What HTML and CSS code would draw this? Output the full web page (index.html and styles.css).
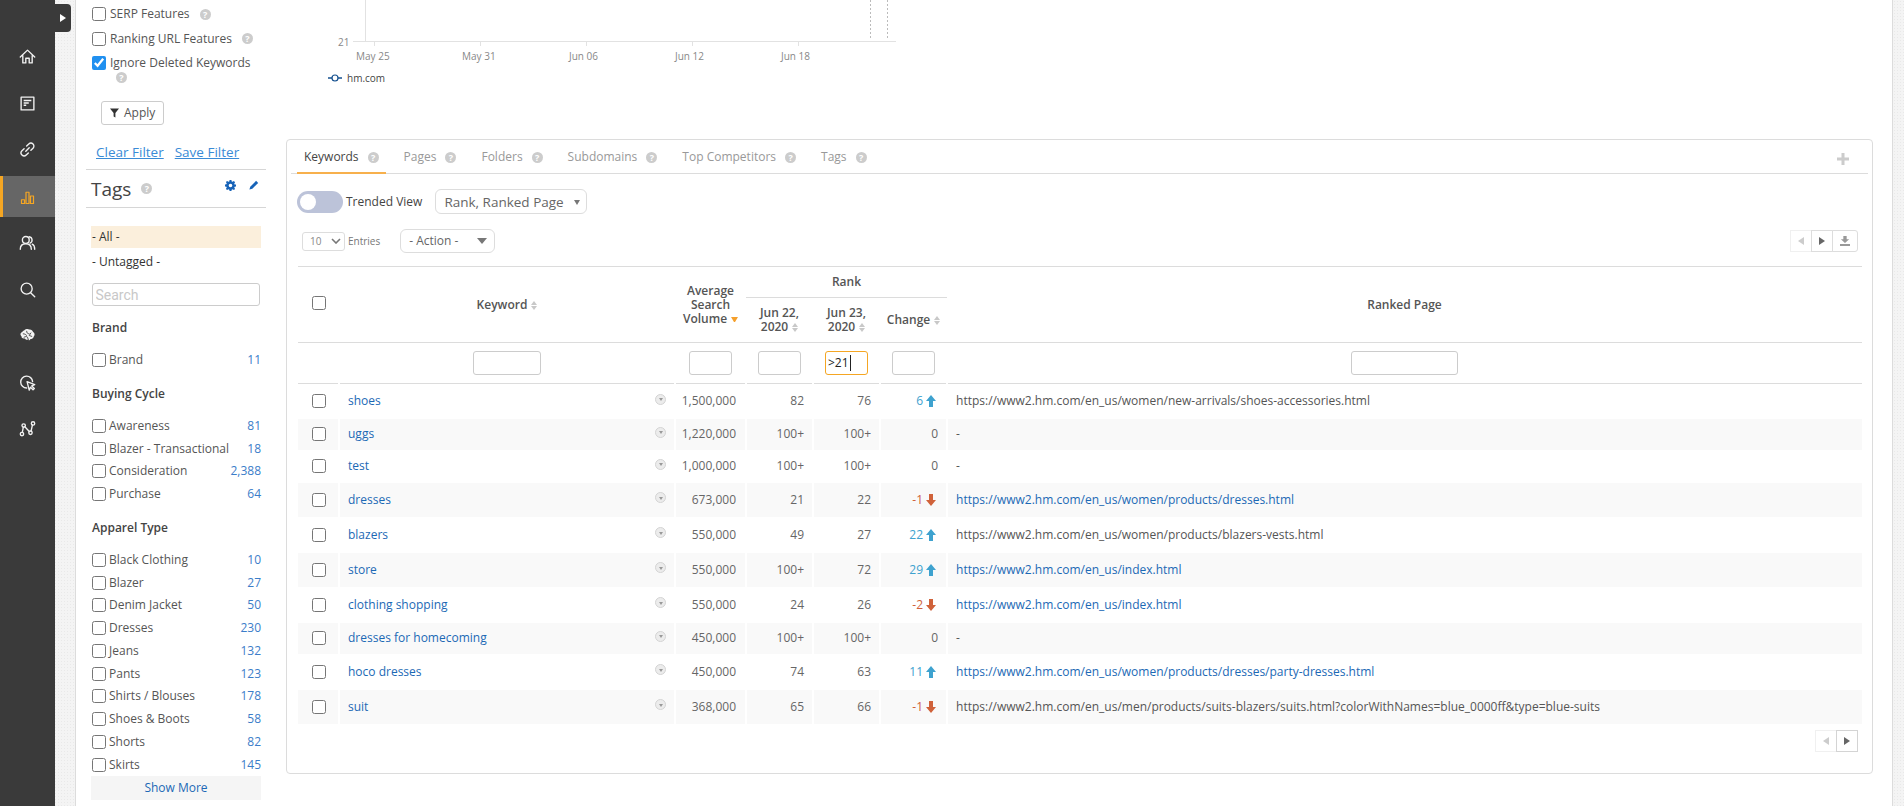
FILE: index.html
```html
<!DOCTYPE html>
<html lang="en">
<head>
<meta charset="utf-8">
<title>Rankings</title>
<link rel="stylesheet" href="styles.css">
</head>
<body>
<svg class="defs" width="0" height="0">
  <symbol id="up" viewBox="0 0 10 12"><path d="M5 0 10 6H7V12H3V6H0Z"/></symbol>
  <symbol id="down" viewBox="0 0 10 12"><path d="M5 12 10 6H7V0H3V6H0Z"/></symbol>
</svg>
<nav class="rail">
  <a class="rail-item"><svg class="ico" viewBox="0 0 20 20"><path d="M1.500 10.500 10 2.500l8.500 8M4.500 9v8.500H8V12h4v5.500h3.500V9"/></svg></a>
  <a class="rail-item"><svg class="ico" viewBox="0 0 20 20"><path d="M2.500 2.500h15v15h-15z"/><path class="fat" d="M5.500 6.500h9M5.500 9.500h6M5.500 12h3"/></svg></a>
  <a class="rail-item"><svg class="ico" viewBox="0 0 20 20"><path d="M8 12 12 8M9 6l2.500-2.500a3.500 3.500 0 0 1 5 5L14 11M11 14l-2.500 2.500a3.500 3.500 0 0 1-5-5L6 9"/></svg></a>
  <a class="rail-item active"><svg class="ico ico-chart" viewBox="0 0 20 20"><path d="M2 13h4v5H2zM8 3h4v15H8zM14 8h4v10h-4z"/></svg></a>
  <a class="rail-item"><svg class="ico" viewBox="0 0 20 20"><circle cx="8" cy="7" r="4"/><path d="M1.500 18c0-4 2.500-6.500 6.500-6.500s6.500 2.500 6.500 6.500M12 3.200a4 4 0 0 1 1 7.600M15.500 12c2 .9 3 3 3 6"/></svg></a>
  <a class="rail-item"><svg class="ico" viewBox="0 0 20 20"><circle cx="9" cy="9" r="6.500"/><path d="M14 14l4.500 4.500"/></svg></a>
  <a class="rail-item"><svg class="ico" viewBox="0 0 20 20"><path class="solid" d="M6 4c2-2 5-2 6-1 2-.5 4 1 4.500 3 2 1 2.500 3.500 1 5-.2 2-2 3.500-4 3-.5 1.500-2 2-3 1-1.500.5-3-.5-3.500-1.500C4 14 2.500 12.500 3 11 1 9.500 1.500 6.500 4 6c0-1 1-2 2-2Z"/><path class="cut" d="M5 8c2 0 3 1 4 2M9 5c0 2 1 3 3 3M14 7l-2 3 3 1M6 12c2-1 3-1 4 0l1 3"/></svg></a>
  <a class="rail-item"><svg class="ico" viewBox="0 0 20 20"><path d="M9 16.500a7 7 0 1 1 7-7.500"/><path d="M9.500 9l9 3.500-3.500 1.500 3 3-1.500 1.500-3-3-1.500 3.500Z"/></svg></a>
  <a class="rail-item"><svg class="ico" viewBox="0 0 20 20"><circle cx="3.500" cy="16.500" r="2"/><circle cx="5.500" cy="6.500" r="2"/><circle cx="13.500" cy="15" r="2"/><circle cx="16.500" cy="4" r="2"/><path d="M3.900 14.500l1.200-6M6.900 8l5.200 5.500M14.200 13.100l1.600-7.200"/></svg></a>
</nav>
<button class="rail-toggle" type="button" aria-label="Expand"><span class="tri-right"></span></button>

<main class="sheet">
  <aside class="filters">
    <div class="opts">
      <label class="opt"><input class="cb" type="checkbox"><span>SERP Features</span><i class="help">?</i></label>
      <label class="opt"><input class="cb" type="checkbox"><span>Ranking URL Features</span><i class="help">?</i></label>
      <label class="opt"><input class="cb" type="checkbox" checked><span>Ignore Deleted Keywords</span></label>
      <i class="help help-below">?</i>
    </div>
    <button class="apply" type="button"><svg class="funnel" viewBox="0 0 10 10"><path d="M0 0H10L6 5V10L4 9V5Z"/></svg>Apply</button>
    <div class="filter-links"><a>Clear Filter</a><a>Save Filter</a></div>
    <div class="tags-head">
      <h2>Tags</h2><i class="help">?</i>
      <svg class="tool tool-gear" viewBox="0 0 12 12"><path fill-rule="evenodd" d="M5 0h2l.3 1.600 1 .4L9.700 1.100l1.300 1.300-.9 1.400.4 1L12 5v2l-1.500.3-.4 1 .9 1.400-1.300 1.300-1.400-.9-1 .4L7 12H5l-.3-1.500-1-.4-1.400.9-1.300-1.300.9-1.400-.4-1L0 7V5l1.500-.3.4-1-.9-1.400L2.300 1l1.400.9 1-.4ZM6 4a2 2 0 1 0 0 4 2 2 0 0 0 0-4Z"/></svg>
      <svg class="tool tool-pen" viewBox="0 0 12 12"><path d="M8.500 1 11 3.500 4 10.500 0.500 11.500 1.500 8Z"/></svg>
    </div>
    <div class="tag-all">- All -</div>
    <div class="tag-untagged">- Untagged -</div>
    <input class="tag-search" type="text" placeholder="Search">

    <h3 class="group">Brand</h3>
    <label class="tag"><input class="cb" type="checkbox"><span>Brand</span><b>11</b></label>

    <h3 class="group">Buying Cycle</h3>
    <label class="tag"><input class="cb" type="checkbox"><span>Awareness</span><b>81</b></label>
    <label class="tag"><input class="cb" type="checkbox"><span>Blazer - Transactional</span><b>18</b></label>
    <label class="tag"><input class="cb" type="checkbox"><span>Consideration</span><b>2,388</b></label>
    <label class="tag"><input class="cb" type="checkbox"><span>Purchase</span><b>64</b></label>

    <h3 class="group">Apparel Type</h3>
    <label class="tag"><input class="cb" type="checkbox"><span>Black Clothing</span><b>10</b></label>
    <label class="tag"><input class="cb" type="checkbox"><span>Blazer</span><b>27</b></label>
    <label class="tag"><input class="cb" type="checkbox"><span>Denim Jacket</span><b>50</b></label>
    <label class="tag"><input class="cb" type="checkbox"><span>Dresses</span><b>230</b></label>
    <label class="tag"><input class="cb" type="checkbox"><span>Jeans</span><b>132</b></label>
    <label class="tag"><input class="cb" type="checkbox"><span>Pants</span><b>123</b></label>
    <label class="tag"><input class="cb" type="checkbox"><span>Shirts / Blouses</span><b>178</b></label>
    <label class="tag"><input class="cb" type="checkbox"><span>Shoes &amp; Boots</span><b>58</b></label>
    <label class="tag"><input class="cb" type="checkbox"><span>Shorts</span><b>82</b></label>
    <label class="tag"><input class="cb" type="checkbox"><span>Skirts</span><b>145</b></label>
    <div class="show-more">Show More</div>
  </aside>

  <section class="content">
    <svg class="chart" width="620" height="139" viewBox="286 0 620 139">
      <path class="axis" d="M365.500 0V41.500M353 41.500H896M374.500 41V46M480.500 41V46M586.500 41V46M692.500 41V46M798.500 41V46"/>
      <path class="dots" d="M870.500 0V39M887.500 0V39"/>
      <text class="tick" x="338" y="46">21</text>
      <text class="tick" x="356" y="60">May 25</text>
      <text class="tick" x="462" y="60">May 31</text>
      <text class="tick" x="569" y="60">Jun 06</text>
      <text class="tick" x="675" y="60">Jun 12</text>
      <text class="tick" x="781" y="60">Jun 18</text>
      <path class="legend-line" d="M328 78H342"/>
      <circle class="legend-dot" cx="335" cy="78" r="3"/>
      <text class="legend" x="347" y="81.500">hm.com</text>
    </svg>

    <div class="panel">
      <div class="tabs">
        <a class="tab current">Keywords<i class="help">?</i></a>
        <a class="tab">Pages<i class="help">?</i></a>
        <a class="tab">Folders<i class="help">?</i></a>
        <a class="tab">Subdomains<i class="help">?</i></a>
        <a class="tab">Top Competitors<i class="help">?</i></a>
        <a class="tab">Tags<i class="help">?</i></a>
        <svg class="add-tab" viewBox="0 0 12 12"><path d="M4.500 0h3v4.500H12v3H7.500V12h-3V7.500H0v-3h4.500Z"/></svg>
      </div>
      <div class="panel-body">
        <div class="bar-view">
          <span class="switch"><span class="knob"></span></span>
          <span class="switch-label">Trended View</span>
          <div class="pick pick-cols">Rank, Ranked Page<span class="tri-down small"></span></div>
        </div>
        <div class="bar-list">
          <div class="entries">10<svg class="chev" viewBox="0 0 10 6"><path d="M1 1l4 4 4-4"/></svg></div>
          <span class="entries-label">Entries</span>
          <div class="pick pick-action">- Action -<span class="tri-down"></span></div>
          <div class="pager top-pager">
            <span class="pg off"><span class="tri-left"></span></span>
            <span class="pg"><span class="tri-right dark"></span></span>
            <span class="pg wide"><svg class="dl" viewBox="0 0 12 12"><path d="M4 0H8V4H11L6 8.500 1 4H4ZM0 9.500H12V12H0Z"/></svg></span>
          </div>
        </div>

        <table class="grid">
          <colgroup>
            <col class="c-check"><col class="c-key"><col class="c-vol"><col class="c-rank"><col class="c-rank"><col class="c-rank"><col>
          </colgroup>
          <thead>
            <tr class="h1">
              <th rowspan="2"><input class="cb" type="checkbox"></th>
              <th rowspan="2">Keyword<span class="sort"></span></th>
              <th rowspan="2" class="vol-head">Average<br>Search<br>Volume<span class="sort-on"></span></th>
              <th colspan="3" class="rank-head">Rank</th>
              <th rowspan="2">Ranked Page</th>
            </tr>
            <tr class="h2">
              <th>Jun 22,<br>2020<span class="sort"></span></th>
              <th>Jun 23,<br>2020<span class="sort"></span></th>
              <th>Change<span class="sort"></span></th>
            </tr>
            <tr class="h3">
              <td></td>
              <td><input class="fi fi-key" type="text"></td>
              <td><input class="fi" type="text"></td>
              <td><input class="fi" type="text"></td>
              <td><div class="fi on">&gt;21<span class="cursor"></span></div></td>
              <td><input class="fi" type="text"></td>
              <td><input class="fi fi-page" type="text"></td>
            </tr>
          </thead>
          <tbody>
            <tr><td class="chk"><input class="cb" type="checkbox"></td><td><div class="kw"><a>shoes</a><span class="more"></span></div></td><td class="n vol">1,500,000</td><td class="n">82</td><td class="n">76</td><td class="n"><span class="chg up">6<svg class="arr"><use href="#up"/></svg></span></td><td class="url">https://www2.hm.com/en_us/women/new-arrivals/shoes-accessories.html</td></tr>
            <tr><td class="chk"><input class="cb" type="checkbox"></td><td><div class="kw"><a>uggs</a><span class="more"></span></div></td><td class="n vol">1,220,000</td><td class="n">100+</td><td class="n">100+</td><td class="n">0</td><td class="url">-</td></tr>
            <tr><td class="chk"><input class="cb" type="checkbox"></td><td><div class="kw"><a>test</a><span class="more"></span></div></td><td class="n vol">1,000,000</td><td class="n">100+</td><td class="n">100+</td><td class="n">0</td><td class="url">-</td></tr>
            <tr><td class="chk"><input class="cb" type="checkbox"></td><td><div class="kw"><a>dresses</a><span class="more"></span></div></td><td class="n vol">673,000</td><td class="n">21</td><td class="n">22</td><td class="n"><span class="chg dn">-1<svg class="arr"><use href="#down"/></svg></span></td><td class="url"><a>https://www2.hm.com/en_us/women/products/dresses.html</a></td></tr>
            <tr><td class="chk"><input class="cb" type="checkbox"></td><td><div class="kw"><a>blazers</a><span class="more"></span></div></td><td class="n vol">550,000</td><td class="n">49</td><td class="n">27</td><td class="n"><span class="chg up">22<svg class="arr"><use href="#up"/></svg></span></td><td class="url">https://www2.hm.com/en_us/women/products/blazers-vests.html</td></tr>
            <tr><td class="chk"><input class="cb" type="checkbox"></td><td><div class="kw"><a>store</a><span class="more"></span></div></td><td class="n vol">550,000</td><td class="n">100+</td><td class="n">72</td><td class="n"><span class="chg up">29<svg class="arr"><use href="#up"/></svg></span></td><td class="url"><a>https://www2.hm.com/en_us/index.html</a></td></tr>
            <tr><td class="chk"><input class="cb" type="checkbox"></td><td><div class="kw"><a>clothing shopping</a><span class="more"></span></div></td><td class="n vol">550,000</td><td class="n">24</td><td class="n">26</td><td class="n"><span class="chg dn">-2<svg class="arr"><use href="#down"/></svg></span></td><td class="url"><a>https://www2.hm.com/en_us/index.html</a></td></tr>
            <tr><td class="chk"><input class="cb" type="checkbox"></td><td><div class="kw"><a>dresses for homecoming</a><span class="more"></span></div></td><td class="n vol">450,000</td><td class="n">100+</td><td class="n">100+</td><td class="n">0</td><td class="url">-</td></tr>
            <tr><td class="chk"><input class="cb" type="checkbox"></td><td><div class="kw"><a>hoco dresses</a><span class="more"></span></div></td><td class="n vol">450,000</td><td class="n">74</td><td class="n">63</td><td class="n"><span class="chg up">11<svg class="arr"><use href="#up"/></svg></span></td><td class="url"><a>https://www2.hm.com/en_us/women/products/dresses/party-dresses.html</a></td></tr>
            <tr><td class="chk"><input class="cb" type="checkbox"></td><td><div class="kw"><a>suit</a><span class="more"></span></div></td><td class="n vol">368,000</td><td class="n">65</td><td class="n">66</td><td class="n"><span class="chg dn">-1<svg class="arr"><use href="#down"/></svg></span></td><td class="url">https://www2.hm.com/en_us/men/products/suits-blazers/suits.html?colorWithNames=blue_0000ff&amp;type=blue-suits</td></tr>
          </tbody>
        </table>
        <div class="pager-row">
          <div class="pager">
            <span class="pg off"><span class="tri-left"></span></span>
            <span class="pg strong"><span class="tri-right dark"></span></span>
          </div>
        </div>
      </div>
    </div>
  </section>
</main>
</body>
</html>
```
FILE: styles.css
```css
* { box-sizing: border-box; }
html, body { margin: 0; height: 806px; overflow: hidden; }
body {
  display: flex;
  font: 12px/16px "Open Sans", sans-serif;
  color: #555;
  background-color: #f4f4f4;
  background-image: radial-gradient(#e9e9e9 1px, transparent 1px);
  background-size: 3px 3px;
  position: relative;
}
a { color: #1c69b5; text-decoration: none; }
h2, h3 { margin: 0; font-weight: 400; }
.defs { position: absolute; }

/* left rail */
.rail {
  width: 55px;
  flex: none;
  background: #3a3a3a;
  padding-top: 36px;
  display: flex;
  flex-direction: column;
  gap: 5.5px;
}
.rail-item { height: 41px; display: flex; align-items: center; justify-content: center; border-left: 3px solid transparent; padding-right: 3px; }
.rail-item.active { background: #666; border-left-color: #f5a623; }
.ico { width: 17px; height: 17px; fill: none; stroke: #f2f2f2; stroke-width: 1.6; stroke-linejoin: round; stroke-linecap: round; }
.ico-chart { width: 15px; height: 15px; position: relative; top: 1px; }
.ico .fat { stroke-width: 1.8; stroke-linecap: butt; }
.ico .solid { fill: #f2f2f2; stroke: none; }
.ico .cut { stroke: #3a3a3a; stroke-width: 1; }
.active .ico { stroke: #f5a623; }
.rail-toggle {
  position: absolute; left: 55px; top: 4px;
  width: 16px; height: 28px; padding: 0 0 0 5px; border: 0;
  background: #3a3a3a; border-radius: 0 4px 4px 0;
  display: flex; align-items: center;
}
.tri-right { display: inline-block; border: solid transparent; border-width: 4.5px 0 4.500px 6px; border-left-color: #fff; }
.tri-right.dark { border-left-color: #666; }
.tri-left { display: inline-block; border: solid transparent; border-width: 4.5px 6px 4.500px 0; border-right-color: #ccc; }
.tri-down { display: inline-block; border: solid transparent; border-width: 6px 5px 0; border-top-color: #777; }
.tri-down.small { border-width: 5px 3.5px 0; margin-left: 10px; position: relative; top: 1px; }

/* sheet */
.sheet {
  margin-left: 20px; margin-right: 11px;
  flex: 1;
  min-width: 0;
  display: flex;
  background: #fff;
  border: solid #dcdcdc;
  border-width: 0 1px;
}
.filters { width: 210px; flex: none; padding-left: 10px; }
.cb { width: 14px; height: 14px; margin: 0; flex: none; accent-color: #2090f0; }
.help {
  display: inline-block; width: 11px; height: 11px; border-radius: 50%;
  background: #ccc; color: #fff; font: 700 9px/11px "Open Sans", sans-serif; text-align: center; flex: none;
}
.opts { padding-left: 6px; padding-top: 2px; height: 101px; }
.opt { display: flex; align-items: center; height: 24.500px; gap: 4px; }
.opt .help { margin-left: 6px; }
.help-below { display: block; margin: -3.500px 0 0 24px; }
.apply {
  display: flex; align-items: center; gap: 5px;
  margin-left: 15px; width: 63px; height: 24px; padding: 0 0 0 8px;
  font: inherit; color: #555; background: #fff; border: 1px solid #ccc; border-radius: 3px;
}
.funnel { width: 9px; height: 10px; fill: #333; }
.filter-links { display: flex; gap: 11px; margin: 17px 0 0 10px; font-size: 13.500px; line-height: 20px; }
.filter-links a { color: #3a8bd6; text-decoration: underline; }
.tags-head {
  width: 180px; height: 39px; margin-top: 7px;
  border: solid #d6d6d6; border-width: 1px 0;
  display: flex; align-items: center; gap: 10px; padding: 0 5px;
  position: relative;
}
.tags-head h2 { font-size: 19px; color: #444; font-family: "Open Sans", sans-serif; }
.tool { position: absolute; top: 10px; width: 10px; height: 10px; fill: #1763b8; }
.tool-gear { left: 139px; width: 11px; height: 11px; }
.tool-pen { left: 163px; }
.tag-all { width: 170px; margin: 18px 0 0 5px; height: 22px; line-height: 22px; background: #fbefdc; color: #333; padding-left: 1px; }
.tag-untagged { margin: 2px 0 0 6px; height: 24px; line-height: 24px; color: #333; }
.tag-search {
  display: block; margin: 9px 0 0 5.5px; width: 168px; height: 23px; padding: 0 3px;
  border: 1px solid #ccc; border-radius: 3px; font: 14px Roboto, sans-serif;
}
.tag-search::placeholder { color: #c8c8c8; }
.group { margin: 11px 0 9.900px 6px; font: 600 12px/22px "Open Sans", sans-serif; color: #444; }
.tag { display: flex; align-items: center; gap: 3px; width: 169px; height: 22.750px; margin-left: 6px; }
.tag b { margin-left: auto; font-weight: 400; color: #3b7dc9; }
.show-more { width: 170px; margin: 0 0 0 5px; height: 24px; line-height: 24px; text-align: center; background: #f5f5f5; color: #1c69b5; }

/* content */
.content { flex: 1; min-width: 0; padding-right: 19px; }
.chart { display: block; }
.axis { stroke: #e2e2e2; fill: none; }
.dots { stroke: #bbb; stroke-dasharray: 2 2; fill: none; }
.tick { font: 10px "Open Sans", sans-serif; fill: #888; }
.legend { font: 10px "Open Sans", sans-serif; fill: #444; }
.legend-line { stroke: #15508f; stroke-width: 1.5; }
.legend-dot { fill: #fff; stroke: #15508f; stroke-width: 1.2; }

.panel { height: 635px; border: 1px solid #dcdcdc; border-radius: 4px; }
.tabs {
  margin: 0 4px; height: 34px; display: flex; align-items: stretch; gap: 11px; padding-left: 6px;
  border-bottom: 1px solid #dcdcdc;
}
.tab { display: flex; align-items: center; gap: 9px; padding: 2px 7px 0; color: #999; margin-bottom: -1px; border-bottom: 2px solid transparent; }
.tab.current { color: #444; border-bottom-color: #f7b04c; }
.add-tab { margin: 13px 19px 0 auto; width: 12px; height: 12px; fill: #ccc; }
.panel-body { padding: 15px 10px 0 11px; }
.bar-view { display: flex; align-items: center; height: 25px; margin-left: -1px; }
.switch { width: 46px; height: 22px; background: #bcc3d9; border-radius: 11px; padding: 3px; }
.knob { display: block; width: 16px; height: 16px; border-radius: 50%; background: #fff; }
.switch-label { margin-left: 3px; color: #444; }
.pick {
  display: flex; align-items: center; background: #fff; border: 1px solid #ddd; border-radius: 6px; color: #666;
}
.pick-cols { margin-left: 13px; width: 152px; height: 25px; padding-left: 8px; font-size: 13.500px; }
.pick-action { margin-left: 20px; width: 95px; height: 24px; padding-left: 8px; justify-content: space-between; padding-right: 7px; }
.bar-list { display: flex; align-items: center; height: 24px; margin: 15px 0 13px; }
.entries {
  margin-left: 4px; width: 43px; height: 19px; display: flex; align-items: center; justify-content: space-between;
  padding: 0 3px 0 7px; border: 1px solid #ddd; border-radius: 3px; font-size: 10px; color: #888;
}
.chev { width: 10px; height: 6px; fill: none; stroke: #777; stroke-width: 1.6; }
.entries-label { margin-left: 3px; font-size: 10px; color: #777; }
.pager { display: flex; }
.top-pager { margin-left: auto; margin-right: 4px; }
.pg { width: 22px; height: 22px; display: flex; align-items: center; justify-content: center; border: 1px solid #ddd; margin-left: -1px; background: #fff; }
.pg.off { border-color: #f0f0f0; }
.pg.wide { width: 26px; border-radius: 0 3px 3px 0; }
.dl { width: 10px; height: 10px; fill: #999; }

/* table */
.grid { width: 1564px; table-layout: fixed; border-collapse: collapse; }
.c-check { width: 41px; }
.c-key { width: 336px; }
.c-vol { width: 71px; }
.c-rank { width: 67px; }
.grid th { font-weight: 600; line-height: 14px; text-align: center; color: #555; padding: 0; }
.h1 { height: 31px; border-top: 1px solid #dcdcdc; }
.h2 { height: 45px; border-bottom: 1px solid #dcdcdc; }
.h3 { height: 41px; border-bottom: 1px solid #dcdcdc; }
.h3 td { text-align: center; vertical-align: middle; padding: 0; }
.rank-head { border-bottom: 1px solid #dcdcdc; }
.sort, .sort-on { display: inline-block; width: 6px; height: 9px; margin-left: 4px; vertical-align: -1px; position: relative; }
.sort::before, .sort::after { content: ""; position: absolute; left: 0; border: solid transparent; border-width: 0 3px; }
.sort::before { top: 0; border-bottom: 4px solid #c8c8c8; }
.sort::after { bottom: 0; border-top: 4px solid #c8c8c8; }
.sort-on { width: 7px; height: 4px; margin-left: 4px; vertical-align: 1px; border: solid transparent; border-width: 5px 3.5px 0; border-top-color: #f5a02c; }
.fi {
  display: inline-block; width: 43px; height: 24px; padding: 0 2px; vertical-align: middle;
  border: 1px solid #ccc; border-radius: 3px; background: #fff; font: 12px/22px "Open Sans", sans-serif; color: #222; text-align: left;
}
.fi-key { width: 68px; }
.fi-page { width: 107px; }
.fi.on { border-color: #f5a623; }
.cursor { display: inline-block; width: 1px; height: 16px; margin-left: 1px; background: #222; vertical-align: -4px; }

.grid tbody tr:nth-child(even) td { background: #f9f9f9; }
.grid tbody td { padding: 0; vertical-align: middle; border-left: 2px solid #fff; white-space: nowrap; }
.grid tbody td:first-child { border-left: 0; }
.grid tbody tr:nth-child(1) { height: 35px; }
.grid tbody tr:nth-child(2) { height: 31px; }
.grid tbody tr:nth-child(3) { height: 33px; }
.grid tbody tr:nth-child(4) { height: 34px; }
.grid tbody tr:nth-child(5) { height: 36px; }
.grid tbody tr:nth-child(6) { height: 34px; }
.grid tbody tr:nth-child(7) { height: 36px; }
.grid tbody tr:nth-child(8) { height: 31px; }
.grid tbody tr:nth-child(9) { height: 36px; }
.grid tbody tr:nth-child(10) { height: 34px; }
.chk { padding-left: 14px !important; }
.chk .cb { display: block; }
.kw { display: flex; align-items: center; justify-content: space-between; padding: 0 8px 0 8px; }
.more { width: 11px; height: 11px; border-radius: 50%; background: #ececec; border: 1px solid #d4d4d4; position: relative; top: -2px; }
.more::after { content: ""; position: absolute; left: 2.5px; top: 3.500px; border: solid transparent; border-width: 3px 2px 0; border-top-color: #999; }
.n { text-align: right; padding-right: 8px !important; color: #666; }
.n.vol { padding-right: 9px !important; }
.chg { display: inline-flex; align-items: center; gap: 3px; }
.chg.up { color: #3ea2cf; }
.chg.dn { color: #d0623a; }
.arr { width: 10px; height: 12px; margin-right: 2px; fill: currentColor; }
.url { padding-left: 8px !important; color: #555; }
.pager-row { display: flex; justify-content: flex-end; margin: 6px 4px 0 0; }
.pg.strong { border: 1px solid #d4d4d4; }
```
